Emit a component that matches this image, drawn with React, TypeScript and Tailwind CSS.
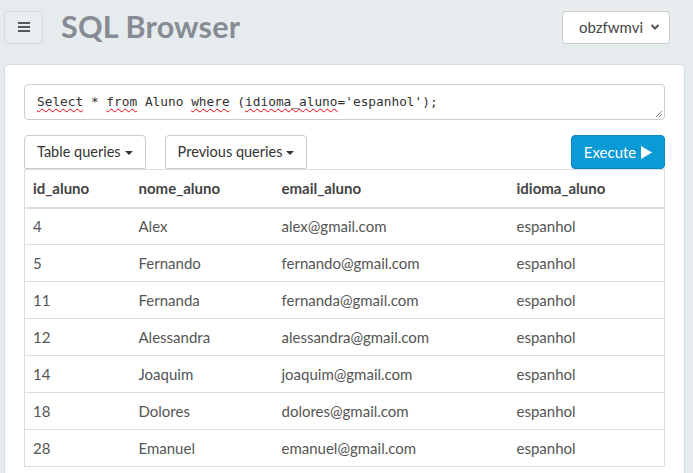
import React from "react";

const rows = [
  { id: 4, nome: "Alex", email: "alex@gmail.com", idioma: "espanhol" },
  { id: 5, nome: "Fernando", email: "fernando@gmail.com", idioma: "espanhol" },
  { id: 11, nome: "Fernanda", email: "fernanda@gmail.com", idioma: "espanhol" },
  { id: 12, nome: "Alessandra", email: "alessandra@gmail.com", idioma: "espanhol" },
  { id: 14, nome: "Joaquim", email: "joaquim@gmail.com", idioma: "espanhol" },
  { id: 18, nome: "Dolores", email: "dolores@gmail.com", idioma: "espanhol" },
  { id: 28, nome: "Emanuel", email: "emanuel@gmail.com", idioma: "espanhol" },
];

function Caret() {
  return <span className="inline-block ml-1 align-middle border-x-4 border-x-transparent border-t-4 border-t-[#333]" />;
}

function Typo({ children }: { children: React.ReactNode }) {
  return <span className="underline decoration-wavy decoration-red-600 decoration-1 underline-offset-2">{children}</span>;
}

export default function App() {
  return (
    <div className="min-h-screen bg-[#e6ebee] font-['Lato','Liberation_Sans',sans-serif] text-[#555]">
      <header className="flex items-center h-[64px] px-1 pb-[10px]">
        <button className="w-[39px] h-[33px] rounded border border-[#d2dae2] bg-[#e8edf0] flex flex-col items-center justify-center gap-[2px]">
          <span className="block w-[12px] h-[2px] bg-[#555]" />
          <span className="block w-[12px] h-[2px] bg-[#555]" />
          <span className="block w-[12px] h-[2px] bg-[#555]" />
        </button>
        <h1 className="ml-[18px] text-[30.5px] font-bold text-[#878c94] tracking-[0.2px]">SQL Browser</h1>
        <div className="ml-auto mr-[19px] w-[108px] h-[33px] rounded border border-[#ccc] bg-white flex items-center pl-[16px] pr-[9px] text-[15px] text-[#444]">
          <span>obzfwmvi</span>
          <svg className="ml-auto" width="10" height="8" viewBox="0 0 10 8">
            <path d="M1.5 2 L5 5.5 L8.5 2" fill="none" stroke="#555" strokeWidth="2" />
          </svg>
        </div>
      </header>
      <main className="mx-1 mr-[8px] bg-white border border-[#d6dee5] rounded-t-[5px] px-[19px] pt-[19px] pb-4">
        <div className="relative h-[36px] border border-[#ccc] rounded-[4px] px-[12px] pt-[7px] font-['DejaVu_Sans_Mono',monospace] text-[12.8px] text-[#333] whitespace-pre">
          <Typo>Select</Typo> * <Typo>from</Typo> Aluno <Typo>where</Typo> (<Typo>idioma_aluno</Typo>='espanhol');
          <svg className="absolute right-[1px] bottom-[1px]" width="9" height="9" viewBox="0 0 9 9">
            <path d="M8 2 L2 8 M8 5 L5 8" stroke="#888" strokeWidth="1" />
          </svg>
        </div>
        <div className="flex items-center mt-[15px] text-[14.5px]">
          <button className="h-[34px] px-[12px] border border-[#ccc] rounded-t-[4px] rounded-b-[2px] text-[#333] bg-white">
            Table queries<Caret />
          </button>
          <button className="ml-[19px] h-[34px] px-[12px] border border-[#ccc] rounded-t-[4px] rounded-b-[2px] text-[#333] bg-white">
            Previous queries<Caret />
          </button>
          <button className="ml-auto h-[34px] w-[94px] rounded-[4px] border border-[#0a87c0] bg-[#0a9ad6] text-[15px] text-white flex items-center justify-center gap-[5px]">
            Execute
            <svg width="11" height="13" viewBox="0 0 11 13">
              <path d="M0 0 L11 6.5 L0 13 Z" fill="white" />
            </svg>
          </button>
        </div>
        <table className="w-full border border-[#ddd] border-collapse text-[15px]">
          <thead>
            <tr className="h-[38px] border-b-2 border-[#ddd] text-left text-[#444]">
              <th className="pl-[8px] w-[106px] font-bold">id_aluno</th>
              <th className="pl-[8px] w-[143px] font-bold">nome_aluno</th>
              <th className="pl-[8px] w-[235px] font-bold">email_aluno</th>
              <th className="pl-[8px] font-bold">idioma_aluno</th>
            </tr>
          </thead>
          <tbody>
            {rows.map((r) => (
              <tr key={r.id} className="h-[37px] border-t border-[#ddd]">
                <td className="pl-[8px]">{r.id}</td>
                <td className="pl-[8px]">{r.nome}</td>
                <td className="pl-[8px]">{r.email}</td>
                <td className="pl-[8px]">{r.idioma}</td>
              </tr>
            ))}
          </tbody>
        </table>
      </main>
    </div>
  );
}
